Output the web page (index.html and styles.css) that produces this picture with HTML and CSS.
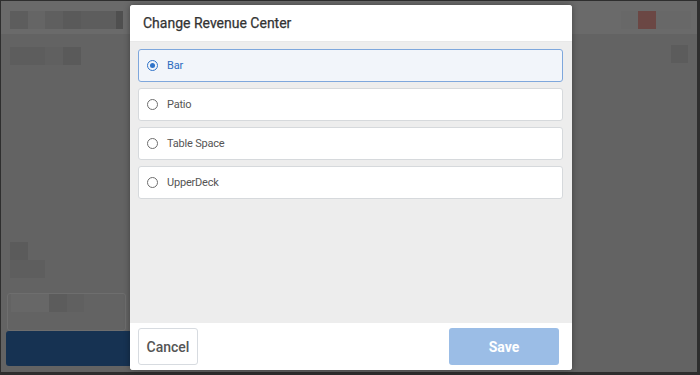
FILE: index.html
```html
<!DOCTYPE html>
<html>
<head>
<meta charset="utf-8">
<link rel="stylesheet" href="styles.css">
</head>
<body>
<div class="frame">
  <div class="app">
    <div class="topbar">
      <div class="tb-left">
        <span class="blk b5d w18"></span><span class="blk b65 w17"></span><span class="blk b5f w18"></span><span class="blk b5a w18"></span><span class="blk b5d w35"></span><span class="blk b4f w7"></span>
      </div>
      <div class="tb-right">
        <span class="blk b68 w17"></span><span class="blk red w18"></span><span class="blk b68 w35"></span>
      </div>
    </div>
    <div class="main">
      <div class="leftcol">
        <div class="row r1"><span class="blk b5d w35"></span><span class="blk b60 w18"></span><span class="blk b5a w18"></span></div>
        <div class="spacer"></div>
        <div class="row"><span class="blk b5b w18"></span></div>
        <div class="row last"><span class="blk b5e w35"></span></div>
        <div class="inputbox"><span class="blk b64 w38"></span><span class="blk b5c w18"></span><span class="blk b60 w17"></span></div>
        <div class="bluebtn"></div>
      </div>
      <div class="rightcol">
        <span class="blk b5c w17 sq"></span>
      </div>
    </div>
  </div>

  <div class="modal">
    <div class="modal-header">Change Revenue Center</div>
    <div class="modal-body">
      <label class="option selected"><span class="radio"></span><span class="opt-label">Bar</span></label>
      <label class="option"><span class="radio"></span><span class="opt-label">Patio</span></label>
      <label class="option"><span class="radio"></span><span class="opt-label">Table Space</span></label>
      <label class="option"><span class="radio"></span><span class="opt-label">UpperDeck</span></label>
    </div>
    <div class="modal-footer">
      <button class="btn btn-cancel">Cancel</button>
      <button class="btn btn-save">Save</button>
    </div>
  </div>
</div>
</body>
</html>
```

FILE: styles.css
```css
* { box-sizing: border-box; }
html, body { margin: 0; padding: 0; }
body {
  width: 700px;
  height: 375px;
  overflow: hidden;
  font-family: Roboto, "Noto Sans", "Liberation Sans", sans-serif;
  background: #2b2b2b;
}
.frame {
  position: relative;
  width: 700px;
  height: 375px;
  border-style: solid;
  border-color: #2e2e2e;
  border-width: 1px 3px 3px 1px;
  background: #636363;
}
.app {
  display: flex;
  flex-direction: column;
  height: 100%;
}
.topbar {
  height: 33px;
  background: #6a6a6a;
  display: flex;
  justify-content: space-between;
  align-items: flex-start;
  padding: 10px 6px 0 9px;
}
.tb-left, .tb-right, .row, .inputbox { display: flex; }
.blk { display: block; height: 18px; }
.w7 { width: 7px; }
.w17 { width: 17px; }
.w18 { width: 18px; }
.w35 { width: 35px; }
.w38 { width: 38px; }
.b4f { background: #4f4f4f; }
.b5a { background: #5a5a5a; }
.b5b { background: #5b5b5b; }
.b5c { background: #5c5c5c; }
.b5d { background: #5d5d5d; }
.b5e { background: #5e5e5e; }
.b5f { background: #5f5f5f; }
.b60 { background: #606060; }
.b64 { background: #676767; }
.b65 { background: #656565; }
.b68 { background: #686868; }
.red { background: #6b4744; }
.main {
  flex: 1;
  display: flex;
  justify-content: space-between;
}
.leftcol {
  width: 200px;
  display: flex;
  flex-direction: column;
  padding: 13px 0 6px 9px;
}
.spacer { flex: 1; }
.row.last { margin-bottom: 15px; }
.inputbox {
  margin: 0 75px 0 -3px;
  height: 38px;
  border: 1px solid #6e6e6e;
  border-radius: 3px;
  padding: 0 0 0 3px;
  align-items: flex-start;
}
.bluebtn {
  margin-left: -4px;
  height: 35px;
  background: #163252;
  border-radius: 3px;
}
.rightcol {
  padding: 11px 9px 0 0;
}
.modal {
  position: absolute;
  left: 129px;
  top: 4px;
  width: 442px;
  height: 365px;
  background: #ededed;
  border-radius: 3px;
  display: flex;
  flex-direction: column;
  overflow: hidden;
  box-shadow: 0 0 6px rgba(0,0,0,0.35);
}
.modal-header {
  height: 37px;
  background: #fff;
  padding: 0 13px;
  display: flex;
  align-items: center;
  font-size: 14px;
  font-weight: 400;
  color: #333;
  border-bottom: 1px solid #e8e8e8;
  -webkit-text-stroke: 0.25px #333;
}
.modal-body {
  flex: 1;
  padding: 7px 9px 0 8px;
  display: flex;
  flex-direction: column;
  gap: 6px;
}
.option {
  height: 33px;
  display: flex;
  align-items: center;
  gap: 9px;
  padding-left: 8px;
  background: #fff;
  border: 1px solid #d6d9dc;
  border-radius: 3px;
  font-size: 11px;
  letter-spacing: -0.2px;
  color: #555;
}
.option.selected {
  background: #f2f5fa;
  border-color: #7ea7dc;
  color: #2c6cc0;
}
.radio {
  width: 11px;
  height: 11px;
  border-radius: 50%;
  border: 1.5px solid #6e6e6e;
  display: flex;
  align-items: center;
  justify-content: center;
  flex: none;
}
.option.selected .radio {
  border-color: #2f73c9;
}
.option.selected .radio::after {
  content: "";
  width: 5px;
  height: 5px;
  border-radius: 50%;
  background: #2f73c9;
}
.modal-footer {
  height: 47px;
  background: #fff;
  display: flex;
  justify-content: space-between;
  align-items: center;
  padding: 0 13px 0 8px;
}
.btn {
  height: 37px;
  border-radius: 3px;
  font-family: Roboto, "Noto Sans", "Liberation Sans", sans-serif;
  font-size: 14px;
  font-weight: 500;
}
.btn-cancel {
  width: 60px;
  background: #fff;
  border: 1px solid #d7dbe0;
  color: #555;
}
.btn-save {
  width: 110px;
  background: #9bbde6;
  border: none;
  color: #fff;
  font-weight: 700;
}
```
